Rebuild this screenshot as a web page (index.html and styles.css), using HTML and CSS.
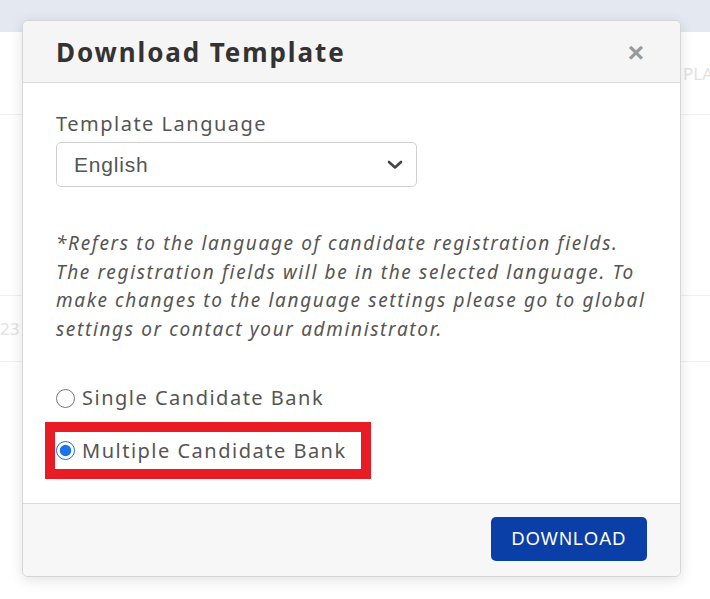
FILE: index.html
```html
<!DOCTYPE html>
<html lang="en">
  <head>
    <meta charset="UTF-8" />
    <title>Download Template</title>
    <link rel="stylesheet" href="styles.css">
  </head>
  <body>
    <div class="topbar"></div>
    <div class="table">
      <div class="row head">
        <span></span><span></span><span class="cell">PLA</span>
      </div>
      <div class="row">
        <span></span><span></span><span class="cell"></span>
      </div>
      <div class="row">
        <span class="cell">23</span><span></span><span class="cell"></span>
      </div>
    </div>

    <div class="modal">
      <div class="modal-header">
        <h3>Download Template</h3>
        <span class="close">&times;</span>
      </div>
      <div class="modal-body">
        <label class="label">Template Language</label>
        <div class="select">
          <span>English</span>
          <svg width="16" height="10" viewBox="0 0 16 10">
            <path d="M2 2 L8 7.5 L14 2" fill="none" stroke="#444" stroke-width="2.6" stroke-linecap="round" stroke-linejoin="round"/>
          </svg>
        </div>
        <p class="note">
          *Refers to the language of candidate registration fields.<br />
          The registration fields will be in the selected language. To<br />
          make changes to the language settings please go to global<br />
          settings or contact your administrator.
        </p>
        <label class="option">
          <input type="radio" name="bank" />
          Single Candidate Bank
        </label>
        <div class="highlight">
          <label class="option">
            <input type="radio" name="bank" checked />
            Multiple Candidate Bank
          </label>
        </div>
      </div>
      <div class="modal-footer">
        <button class="btn">DOWNLOAD</button>
      </div>
    </div>
  </body>
</html>
```

FILE: styles.css
```css
body {
  margin: 0;
  height: 599px;
  overflow: hidden;
  background: #fff;
  font-family: "Noto Sans", "Open Sans", sans-serif;
  color: #444;
}
.topbar {
  height: 32px;
  background: #e4e8f0;
}
.row {
  display: grid;
  grid-template-columns: 24px 1fr 27px;
  height: 65px;
  align-items: center;
  border-bottom: 1px solid #f0f0f0;
  overflow: hidden;
}
.row.head {
  height: 82px;
}
.row:nth-child(2) {
  height: 180px;
}
.cell {
  font-size: 17px;
  color: #e2e2e2;
  white-space: nowrap;
  overflow: hidden;
}
.modal {
  position: absolute;
  left: 22px;
  top: 20px;
  width: 657px;
  height: 555px;
  background: #fff;
  border: 1px solid #d6d6d6;
  border-radius: 6px;
  box-shadow: 0 3px 14px rgba(0, 0, 0, 0.12);
  display: flex;
  flex-direction: column;
  overflow: hidden;
}
.modal-header {
  height: 61px;
  background: #f5f5f5;
  border-bottom: 1px solid #dcdcdc;
  display: flex;
  align-items: center;
  justify-content: space-between;
  padding: 0 33px;
}
.modal-header h3 {
  margin: 0;
  font-size: 26px;
  letter-spacing: 1.9px;
  font-weight: bold;
  color: #333;
}
.close {
  font-family: "Liberation Sans", Arial, sans-serif;
  font-size: 28px;
  font-weight: bold;
  color: #999;
  margin-right: 3px;
  margin-top: 2px;
}
.modal-body {
  flex: 1;
  padding: 28px 33px 0;
}
.label {
  display: block;
  font-size: 20px;
  letter-spacing: 1.5px;
  line-height: 26px;
  color: #555;
}
.select {
  margin-top: 5px;
  height: 43px;
  border: 1px solid #d0d0d0;
  border-radius: 5px;
  display: flex;
  align-items: center;
  justify-content: space-between;
  padding: 0 13px 0 17px;
  width: 329px;
  font-family: "Liberation Sans", Arial, sans-serif;
  font-size: 21px;
  letter-spacing: 0.8px;
  color: #555;
}
.note {
  margin: 42px 0 0;
  font-size: 19px;
  letter-spacing: 1.65px;
  line-height: 28.5px;
  font-style: italic;
  color: #555;
  white-space: nowrap;
}
.option {
  display: flex;
  align-items: center;
  gap: 7px;
  font-size: 20px;
  letter-spacing: 1.5px;
  line-height: 30px;
  color: #555;
}
.modal-body > .option {
  margin-top: 40px;
}
.option input {
  width: 19px;
  height: 19px;
  margin: 0;
  accent-color: #1a73e8;
}
.highlight {
  margin: 9px 0 0 -11px;
  width: 305px;
  height: 37px;
  border: 10px solid #e81c24;
  display: flex;
  align-items: center;
  padding-left: 1px;
}
.modal-footer {
  height: 73px;
  background: #f7f7f7;
  border-top: 1px solid #dcdcdc;
  display: flex;
  justify-content: flex-end;
  align-items: flex-start;
  padding: 13px 33px 0;
  box-sizing: border-box;
}
.btn {
  width: 156px;
  height: 44px;
  background: #0b3fa8;
  color: #fff;
  border: none;
  border-radius: 5px;
  font-family: "Liberation Sans", Arial, sans-serif;
  font-size: 18px;
  letter-spacing: 1.1px;
  cursor: pointer;
}
```
